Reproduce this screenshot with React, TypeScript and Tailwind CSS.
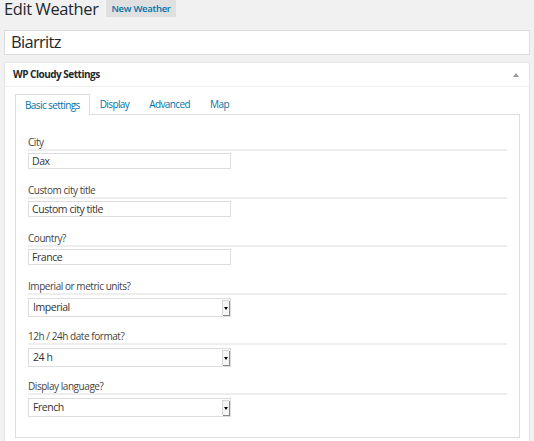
import React from "react";

const font = { fontFamily: '"Open Sans", "Noto Sans", sans-serif' };

function Label({ children }: { children: React.ReactNode }) {
  return (
    <div className="h-[13px] text-[10px] leading-[13px] tracking-[-0.45px] text-[#444] border-b-2 border-[#eeeeee] box-content">
      {children}
    </div>
  );
}

function TextField({ label, value }: { label: string; value: string }) {
  return (
    <div className="pb-[15px]">
      <Label>{label}</Label>
      <div className="mt-[2px] w-[203px] h-[16px] border border-[#dddddd] bg-white px-[3px] text-[10.5px] leading-[14px] tracking-[-0.45px] text-[#333]">
        {value}
      </div>
    </div>
  );
}

function SelectField({ label, value }: { label: string; value: string }) {
  return (
    <div className="pb-[13px]">
      <Label>{label}</Label>
      <div className="mt-[3px] w-[203px] h-[19px] border border-[#dddddd] bg-white flex items-center">
        <div className="flex-1 px-[4px] text-[10.5px] leading-[17px] tracking-[-0.45px] text-[#333]">{value}</div>
        <div className="w-[7px] h-[15px] mr-[1px] bg-[#f6f6f6] border-l border-t border-[#d5d5d5] shadow-[1px_1px_0_#888] flex items-center justify-center">
          <div className="w-0 h-0 border-l-[2px] border-r-[2px] border-t-[3px] border-l-transparent border-r-transparent border-t-black" />
        </div>
      </div>
    </div>
  );
}

export default function App() {
  return (
    <div className="w-[534px] h-[441px] bg-[#f1f1f1] overflow-hidden" style={font}>
      <div className="pl-[4px] pr-[4px]">
        <div className="flex items-start h-[30px]">
          <div className="text-[16.5px] leading-[17px] tracking-[-0.4px] text-[#23282d]">Edit Weather</div>
          <div className="ml-[8px] h-[17px] px-[5px] bg-[#e0e0e0] text-[9.5px] leading-[17px] tracking-[-0.3px] font-semibold text-[#0073aa]">
            New Weather
          </div>
        </div>
        <div className="h-[25px] bg-white border border-[#dddddd] px-[6px] text-[16.5px] leading-[22px] tracking-[-0.7px] text-[#23282d]">
          Biarritz
        </div>
        <div className="mt-[7px] bg-white border border-[#e5e5e5] h-[400px]">
          <div className="h-[24px] border-b border-[#eeeeee] flex items-center justify-between px-[8px]">
            <div className="text-[10px] font-bold tracking-[-0.5px] text-[#23282d]">WP Cloudy Settings</div>
            <div className="w-0 h-0 border-l-[3px] border-r-[3px] border-b-[4px] border-l-transparent border-r-transparent border-b-[#999] mr-[2px]" />
          </div>
          <div className="pl-[10px] pr-[9px] pt-[7px]">
            <div className="flex h-[21px] relative z-10 text-[10px] tracking-[-0.6px] text-[#0073aa]">
              <div className="px-[9px] border border-b-0 border-[#dddddd] bg-white h-[21px] leading-[20px]">
                Basic settings
              </div>
              <div className="px-[10px] leading-[20px]">Display</div>
              <div className="px-[10px] leading-[20px]">Advanced</div>
              <div className="px-[10px] leading-[20px]">Map</div>
            </div>
            <div className="-mt-px border border-[#dddddd] h-[324px] px-[12px] pt-[21px]">
              <TextField label="City" value="Dax" />
              <TextField label="Custom city title" value="Custom city title" />
              <TextField label="Country?" value="France" />
              <SelectField label="Imperial or metric units?" value="Imperial" />
              <SelectField label="12h / 24h date format?" value="24 h" />
              <SelectField label="Display language?" value="French" />
            </div>
          </div>
        </div>
      </div>
    </div>
  );
}
